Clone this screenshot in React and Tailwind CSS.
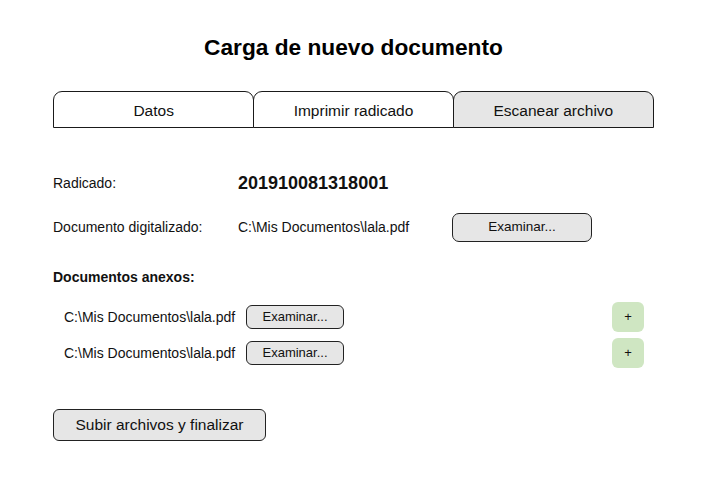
const tabs = [
  { label: 'Datos', active: false },
  { label: 'Imprimir radicado', active: false },
  { label: 'Escanear archivo', active: true },
];

const anexos = ['C:\\Mis Documentos\\lala.pdf', 'C:\\Mis Documentos\\lala.pdf'];

export default function App() {
  return (
    <div
      className="w-[707px] h-[487px] bg-white text-[#111] flex flex-col"
      style={{ fontFamily: '"Liberation Sans", Arial, sans-serif' }}
    >
      <h1 className="mt-[32px] h-[30px] leading-[30px] text-center text-[22.7px] font-bold text-black">
        Carga de nuevo documento
      </h1>

      <div className="ml-[53px] mt-[29px] flex w-[601px] h-[37px]">
        {tabs.map((tab, i) => (
          <div
            key={tab.label}
            className={`flex-1 flex items-center justify-center pt-[3px] rounded-t-[9px] border-[1.5px] border-[#1a1a1a] text-[15.5px] ${
              i > 0 ? '-ml-[1.5px]' : ''
            } ${tab.active ? 'bg-[#e6e6e6]' : 'bg-white'}`}
          >
            {tab.label}
          </div>
        ))}
      </div>

      <div className="ml-[53px] mt-[40px] h-[30px] flex items-center">
        <span className="w-[185px] text-[14px]">Radicado:</span>
        <span className="text-[18px] font-bold">201910081318001</span>
      </div>

      <div className="ml-[53px] mt-[14px] h-[30px] flex items-center">
        <span className="w-[185px] text-[14px]">Documento digitalizado:</span>
        <span className="w-[214px] text-[14px]">C:\Mis Documentos\lala.pdf</span>
        <button className="w-[140px] h-[29px] rounded-[7px] border-[1.5px] border-[#222] bg-[#e6e6e6] text-[13.5px]">
          Examinar...
        </button>
      </div>

      <div className="ml-[53px] mt-[25px] h-[20px] flex items-center text-[14px] font-bold">
        Documentos anexos:
      </div>

      <div className="ml-[64px] mt-[15px] flex flex-col gap-[6px] w-[580px]">
        {anexos.map((path, i) => (
          <div key={i} className="h-[30px] flex items-center">
            <span className="w-[182px] text-[14px]">{path}</span>
            <button className="w-[98px] h-[24px] rounded-[6px] border-[1.5px] border-[#222] bg-[#e6e6e6] text-[13px]">
              Examinar...
            </button>
            <button className="ml-auto w-[32px] h-[30px] rounded-[6px] bg-[#cfe6c2] text-[13px]">+</button>
          </div>
        ))}
      </div>

      <div className="ml-[53px] mt-[41px]">
        <button className="w-[213px] h-[32px] rounded-[6px] border-[1.5px] border-[#222] bg-[#e6e6e6] text-[15.5px]">
          Subir archivos y finalizar
        </button>
      </div>
    </div>
  );
}
